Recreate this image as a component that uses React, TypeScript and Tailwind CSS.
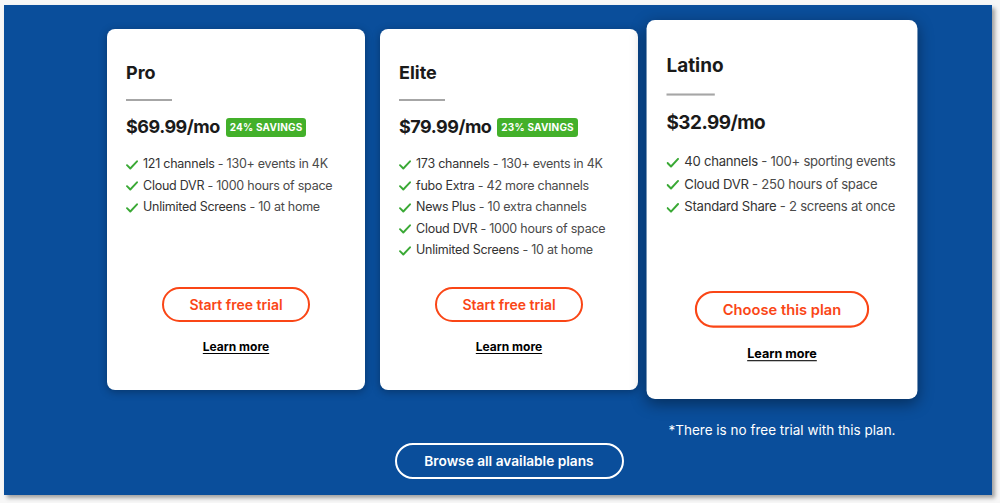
import React from 'react';

type Feature = { lead: string; rest: string };

type Plan = {
    name: string;
    price: string;
    savings?: string;
    features: Feature[];
    cta: string;
    featured?: boolean;
};

const plans: Plan[] = [
    {
        name: 'Pro',
        price: '$69.99',
        savings: '24% SAVINGS',
        features: [
            { lead: '121 channels', rest: '130+ events in 4K' },
            { lead: 'Cloud DVR', rest: '1000 hours of space' },
            { lead: 'Unlimited Screens', rest: '10 at home' },
        ],
        cta: 'Start free trial',
    },
    {
        name: 'Elite',
        price: '$79.99',
        savings: '23% SAVINGS',
        features: [
            { lead: '173 channels', rest: '130+ events in 4K' },
            { lead: 'fubo Extra', rest: '42 more channels' },
            { lead: 'News Plus', rest: '10 extra channels' },
            { lead: 'Cloud DVR', rest: '1000 hours of space' },
            { lead: 'Unlimited Screens', rest: '10 at home' },
        ],
        cta: 'Start free trial',
    },
    {
        name: 'Latino',
        price: '$32.99',
        features: [
            { lead: '40 channels', rest: '100+ sporting events' },
            { lead: 'Cloud DVR', rest: '250 hours of space' },
            { lead: 'Standard Share', rest: '2 screens at once' },
        ],
        cta: 'Choose this plan',
        featured: true,
    },
];

const CheckMark: React.FC = () => (
    <svg width="12" height="10" viewBox="0 0 12 10" className="shrink-0">
        <path d="M1 5.2 L4.3 8.5 L11 1.3" fill="none" stroke="#3aa935" strokeWidth="1.9" strokeLinecap="round" strokeLinejoin="round" />
    </svg>
);

const PlanCard: React.FC<{ plan: Plan }> = ({ plan }) => (
    <div
        className={`flex flex-col h-[361px] bg-white rounded-lg px-[19px] pt-[32px] pb-[33px] ${
            plan.featured ? 'scale-105 shadow-[0_4px_14px_rgba(0,0,0,0.4)]' : 'shadow-[0_2px_8px_rgba(0,0,0,0.3)]'
        }`}
    >
        <h3 className="text-[18px] leading-6 font-bold text-[#1a1a1a]">{plan.name}</h3>
        <div className="mt-[14px] h-[2px] w-[46px] bg-[#a6a6a6]" />
        <div className="mt-[14px] flex items-center gap-[6px]">
            <span className="text-[18px] leading-6 font-bold text-[#1a1a1a] tracking-[-0.5px]">
                {plan.price}/mo
            </span>
            {plan.savings && (
                <span className="h-[19px] px-[4px] flex items-center rounded-[3px] bg-[#43b02a] text-white text-[10px] font-bold tracking-[0.2px]">
                    {plan.savings}
                </span>
            )}
        </div>
        <ul className="mt-[15px]">
            {plan.features.map((f) => (
                <li key={f.lead + f.rest} className="flex items-center gap-[5px] h-[21.5px] whitespace-nowrap text-[12.5px] text-[#4a4a4a] tracking-[-0.25px]">
                    <CheckMark />
                    <span>
                        <span className="text-[#333]">{f.lead}</span> - {f.rest}
                    </span>
                </li>
            ))}
        </ul>
        <div className="mt-auto flex flex-col items-center">
            <button className="h-[35px] px-[25px] rounded-full border-2 border-[#fa4616] text-[#fa4616] text-[14px] font-semibold">
                {plan.cta}
            </button>
            <a href="#" className="mt-[15px] text-[12px] leading-5 font-bold text-black underline underline-offset-2">
                Learn more
            </a>
        </div>
    </div>
);

export default function App() {
    return (
        <div className="w-[1000px] h-[503px] bg-[#f7f7f7] pt-[5px] pl-[4px]" style={{ fontFamily: 'Inter, "Noto Sans", sans-serif' }}>
            <div className="w-[988px] h-[490px] bg-[#0a4e9b] shadow-[3px_3px_4px_rgba(0,0,0,0.35)] pt-[24px] pl-[103px]">
                <div className="w-[804px] flex flex-col">
                    <div className="grid grid-cols-3 gap-[15px]">
                        {plans.map((p) => (
                            <PlanCard key={p.name} plan={p} />
                        ))}
                    </div>
                    <div className="grid grid-cols-3 gap-[15px] mt-[30px]">
                        <div />
                        <div />
                        <p className="text-center text-white text-[13.5px] leading-5">*There is no free trial with this plan.</p>
                    </div>
                    <div className="flex justify-center mt-[3px]">
                        <button className="h-[36px] w-[229px] rounded-full border-2 border-white text-white text-[13.7px] font-semibold">
                            Browse all available plans
                        </button>
                    </div>
                </div>
            </div>
        </div>
    );
}
